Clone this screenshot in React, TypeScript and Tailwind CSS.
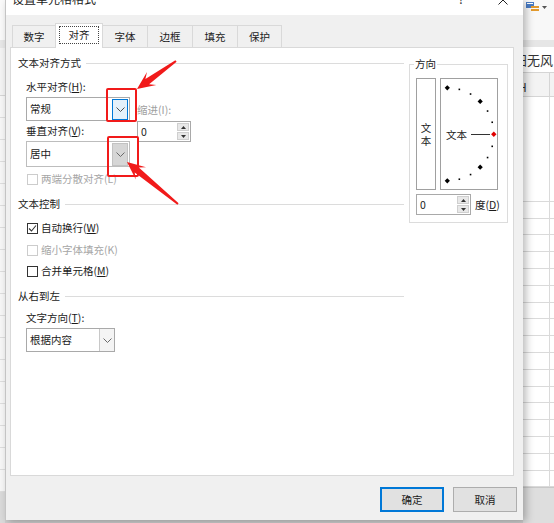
import React from 'react'

const RED = '#f11a1a'

function Chevron({ color = '#4d4d4d' }: { color?: string }) {
  return (
    <svg width="9" height="5" viewBox="0 0 9 5">
      <path d="M0.5 0.5 L4.5 4.5 L8.5 0.5" fill="none" stroke={color} strokeWidth="1" />
    </svg>
  )
}

function SpinArrows() {
  return (
    <div className="flex flex-col gap-[1px] w-[13px] h-full py-[1px] pr-[1px]">
      <div className="flex-1 bg-[#e8e8e8] border border-[#cfcfcf] flex items-center justify-center">
        <svg width="5" height="3" viewBox="0 0 5 3">
          <path d="M0 3 L2.5 0 L5 3 Z" fill="#333" />
        </svg>
      </div>
      <div className="flex-1 bg-[#e8e8e8] border border-[#cfcfcf] flex items-center justify-center">
        <svg width="5" height="3" viewBox="0 0 5 3">
          <path d="M0 0 L2.5 3 L5 0 Z" fill="#333" />
        </svg>
      </div>
    </div>
  )
}

function CheckRow({ checked, disabled, children }: { checked?: boolean; disabled?: boolean; children: React.ReactNode }) {
  return (
    <div className={`flex items-center h-[16px] pl-[9px] gap-[3px] ${disabled ? 'text-[#a6a6a6]' : ''}`}>
      <div className={`w-[11px] h-[11px] border bg-white flex items-center justify-center ${disabled ? 'border-[#cccccc]' : 'border-[#333333]'}`}>
        {checked && (
          <svg width="9" height="9" viewBox="0 0 9 9">
            <path d="M1 4.5 L3.5 7 L8 1.5" fill="none" stroke="#333" strokeWidth="1.1" />
          </svg>
        )}
      </div>
      <span className="leading-[16px]">{children}</span>
    </div>
  )
}

function SectionTitle({ text, className = '' }: { text: string; className?: string }) {
  return (
    <div className={`flex items-center gap-[5px] h-[16px] ${className}`}>
      <span className="leading-[16px] whitespace-nowrap">{text}</span>
      <div className="flex-1 h-px bg-[#dcdcdc]" />
    </div>
  )
}

function arrowPoints(tx: number, ty: number, px: number, py: number) {
  const dx = px - tx
  const dy = py - ty
  const len = Math.hypot(dx, dy)
  const ux = dx / len
  const uy = dy / len
  const nx = -uy
  const ny = ux
  const head = 18
  const barb = 8
  const neck = 3.2
  const tail = 1
  const bx = px - ux * head
  const by = py - uy * head
  const kx = px - ux * head * 0.7
  const ky = py - uy * head * 0.7
  const pts = [
    [tx + nx * tail, ty + ny * tail],
    [kx + nx * neck, ky + ny * neck],
    [bx + nx * barb, by + ny * barb],
    [px, py],
    [bx - nx * barb, by - ny * barb],
    [kx - nx * neck, ky - ny * neck],
    [tx - nx * tail, ty - ny * tail],
  ]
  return pts.map(p => `${p[0].toFixed(1)},${p[1].toFixed(1)}`).join(' ')
}

function Dial() {
  const cx = 6.3
  const cy = 55.3
  const r = 46.5
  const marks = []
  for (let a = -90; a <= 90; a += 15) {
    const rad = (a * Math.PI) / 180
    const x = cx + r * Math.cos(rad)
    const y = cy - r * Math.sin(rad)
    const big = a % 45 === 0
    if (a === 0) continue
    if (big) {
      marks.push(<path key={a} d={`M${x} ${y - 2.6} L${x + 2.6} ${y} L${x} ${y + 2.6} L${x - 2.6} ${y} Z`} fill="#000" />)
    } else {
      marks.push(<rect key={a} x={x - 0.8} y={y - 0.8} width="1.6" height="1.6" fill="#000" />)
    }
  }
  return (
    <svg width="56" height="110" viewBox="0 0 56 110">
      {marks}
      <text x="5" y="59.5" fontSize="10.5" fill="#1b1b1b" fontFamily="'Noto Sans CJK SC', sans-serif">文本</text>
      <line x1="30" y1="55.5" x2="49" y2="55.5" stroke="#333" strokeWidth="1" />
      <path d={`M52.8 52.6 L55.5 55.3 L52.8 58 L50.1 55.3 Z`} fill="#e00000" />
    </svg>
  )
}

const tabs = [
  { t: '数字', w: 'w-[44px]' },
  { t: '对齐', w: 'w-[48px]', active: true },
  { t: '字体', w: 'w-[46px]' },
  { t: '边框', w: 'w-[46px]' },
  { t: '填充', w: 'w-[46px]' },
  { t: '保护', w: 'w-[45px]' },
]

function Dialog() {
  return (
    <div className="relative z-10 w-[518px] h-[520px] flex flex-col bg-[#f0f0f0] shadow-[3px_2px_8px_rgba(0,0,0,0.28)] border-l border-[#c4c4c4]">
      {/* title bar */}
      <div className="h-[15px] bg-white flex items-start overflow-hidden pl-[6px]">
        <span className="-mt-[9px] leading-[16px] text-[12px]">设置单元格格式</span>
        <span className="ml-auto -mt-[9px] leading-[16px] text-[12px] text-[#333]">?</span>
        <svg className="ml-[34px] mr-[15px] -mt-[5px]" width="10" height="10" viewBox="0 0 10 10">
          <path d="M0.5 0.5 L9.5 9.5 M9.5 0.5 L0.5 9.5" stroke="#222" strokeWidth="1" />
        </svg>
      </div>

      <div className="flex-1 flex flex-col pt-[8px]">
        {/* tabs */}
        <div className="relative z-10 h-[24px] ml-[6px] flex items-end">
          {tabs.map(tab =>
            tab.active ? (
              <div
                key={tab.t}
                className={`${tab.w} h-[25px] -mb-px -ml-px bg-white border border-b-0 border-[#d9d9d9] flex items-start justify-start pl-[3px] pt-[2px]`}
              >
                <span className="w-[40px] h-[18px] border border-dotted border-[#444] flex items-center justify-center leading-[16px]">
                  {tab.t}
                </span>
              </div>
            ) : (
              <div
                key={tab.t}
                className={`${tab.w} h-[22px] -ml-px first:ml-0 bg-[#f0f0f0] border border-b-0 border-[#d9d9d9] flex items-center justify-center leading-[16px]`}
              >
                {tab.t}
              </div>
            )
          )}
        </div>

        {/* panel */}
        <div className="ml-[4px] w-[504px] h-[429px] bg-white border border-[#d9d9d9] flex">
          {/* left column */}
          <div className="w-[393px] pl-[7px] pt-[7px] flex flex-col">
            <SectionTitle text="文本对齐方式" />

            <div className="flex mt-[8px] pl-[8px]">
              <div className="w-[104px] flex flex-col">
                <div className="h-[16px] leading-[16px]">
                  水平对齐(<u>H</u>):
                </div>
                <div className="mt-[2px] h-[24px] border border-[#a9a9a9] bg-white flex items-center">
                  <span className="pl-[3px] flex-1">常规</span>
                  <div className="w-[16px] h-[21px] mr-[1px] bg-[#e5f1fb] border border-[#0078d7] flex items-center justify-center">
                    <Chevron />
                  </div>
                </div>
                <div className="mt-[2px] h-[16px] leading-[16px]">
                  垂直对齐(<u>V</u>):
                </div>
                <div className="mt-[2px] h-[26px] border border-[#bdbdbd] bg-white flex items-center">
                  <span className="pl-[3px] flex-1">居中</span>
                  <div className="w-[16px] h-[23px] mr-[1px] bg-[#d6d6d6] border border-[#c2c2c2] flex items-center justify-center">
                    <Chevron color="#6a6a6a" />
                  </div>
                </div>
              </div>
              <div className="ml-[7px] flex flex-col">
                <div className="mt-[23px] h-[16px] leading-[16px] text-[#a0a0a0]">缩进(I):</div>
                <div className="mt-[3px] w-[54px] h-[21px] border border-[#a9a9a9] bg-white flex items-center">
                  <span className="pl-[3px] flex-1">0</span>
                  <SpinArrows />
                </div>
              </div>
            </div>

            <div className="mt-[4px]">
              <CheckRow disabled>两端分散对齐(L)</CheckRow>
            </div>

            <SectionTitle text="文本控制" className="mt-[9px]" />
            <div className="mt-[8px]">
              <CheckRow checked>
                自动换行(<u>W</u>)
              </CheckRow>
            </div>
            <div className="mt-[6px]">
              <CheckRow disabled>缩小字体填充(K)</CheckRow>
            </div>
            <div className="mt-[5px]">
              <CheckRow>
                合并单元格(<u>M</u>)
              </CheckRow>
            </div>

            <SectionTitle text="从右到左" className="mt-[9px]" />
            <div className="mt-[6px] pl-[8px] h-[16px] leading-[16px]">
              文字方向(<u>T</u>):
            </div>
            <div className="mt-[2px] ml-[8px] w-[89px] h-[24px] border border-[#a9a9a9] bg-white flex items-center">
              <span className="pl-[3px] flex-1">根据内容</span>
              <div className="w-[15px] h-full bg-[#f4f4f4] border-l border-[#c8c8c8] flex items-center justify-center">
                <Chevron color="#6a6a6a" />
              </div>
            </div>
          </div>

          {/* orientation group */}
          <div className="ml-[5px] mt-[16px] w-[99px] h-[159px] border border-[#dcdcdc] flex flex-col">
            <span className="-mt-[9px] ml-[4px] w-fit px-[1px] bg-white leading-[16px]">方向</span>
            <div className="mt-[6px] ml-[6px] flex gap-[4px]">
              <div className="w-[20px] h-[112px] border border-[#a0a0a0] flex flex-col items-center justify-center leading-[13px]">
                <span>文</span>
                <span>本</span>
              </div>
              <div className="w-[58px] h-[112px] border border-[#a0a0a0]">
                <Dial />
              </div>
            </div>
            <div className="mt-[4px] ml-[6px] flex items-center">
              <div className="w-[55px] h-[21px] border border-[#a9a9a9] bg-white flex items-center">
                <span className="pl-[3px] flex-1">0</span>
                <SpinArrows />
              </div>
              <span className="ml-[4px] leading-[16px]">
                度(<u>D</u>)
              </span>
            </div>
          </div>
        </div>

        {/* buttons */}
        <div className="mt-[11px] flex justify-end gap-[9px] pr-[6px]">
          <button className="w-[64px] h-[25px] bg-[#e1e1e1] border-2 border-[#0078d7] leading-[16px]">确定</button>
          <button className="w-[64px] h-[25px] bg-[#e1e1e1] border border-[#adadad] leading-[16px]">取消</button>
        </div>
      </div>
    </div>
  )
}

const rows = Array.from({ length: 18 }, (_, i) => i)

function LeftStrip() {
  return (
    <div className="w-[5px] h-full flex flex-col bg-white">
      <div className="h-[40px] bg-[#fafafa]" />
      <div className="h-[8px] bg-[#e8e8e8]" />
      <div className="h-[48px] bg-[#f4f4f4] border-b border-[#d6d6d6]" />
      {rows.map(i => (
        <div key={i} className="h-[22px] border-b border-[#dedede] bg-[#f7f7f7]" />
      ))}
      <div className="flex-1 bg-[#dadada]" />
    </div>
  )
}

function RightStrip() {
  return (
    <div className="w-[31px] h-full flex flex-col bg-white overflow-hidden">
      <div className="h-[40px] bg-[#f8f8f8] flex items-start pt-[1px] pl-[3px] gap-[3px]">
        <svg width="13" height="12" viewBox="0 0 13 12">
          <rect x="0" y="1" width="8" height="6" fill="#4a7cc4" />
          <rect x="5" y="5" width="8" height="2" fill="#e39a2d" />
          <rect x="5" y="8" width="8" height="2" fill="#e39a2d" />
          <rect x="1" y="2" width="6" height="1" fill="#ffffff" />
        </svg>
        <svg className="mt-[5px]" width="5" height="3" viewBox="0 0 5 3">
          <path d="M0 0 L5 0 L2.5 3 Z" fill="#555" />
        </svg>
      </div>
      <div className="h-[7px] bg-[#e6e6e6]" />
      <div className="h-[26px] border-b border-[#d5d5d5] flex items-center overflow-hidden">
        <span className="-ml-[9px] text-[13px] whitespace-nowrap text-[#333]">阳无风</span>
      </div>
      <div className="h-[24px] bg-[#f3f3f3] border-b border-[#d5d5d5]">
        <div className="w-[27px] h-full border-r border-[#d5d5d5] flex items-end pb-[2px] overflow-hidden">
          <span className="-ml-[5px] text-[12px] leading-[14px] text-[#333]">H</span>
        </div>
      </div>
      <div className="h-[88px]">
        <div className="w-[27px] h-full border-r border-[#dadada]" />
      </div>
      {rows.map(i => (
        <div key={i} className="h-[16.8px] border-b border-[#dadada]">
          <div className="w-[27px] h-full border-r border-[#dadada]" />
        </div>
      ))}
      <div className="flex-1 bg-[#dedede] border-t border-[#c8c8c8]" />
    </div>
  )
}

export default function App() {
  return (
    <div className="relative w-[554px] h-[523px] overflow-hidden flex bg-white text-[10.5px] text-[#1b1b1b] font-[family-name:'Noto_Sans_CJK_SC','Noto_Sans',sans-serif]">
      <LeftStrip />
      <div className="w-[518px] h-full flex flex-col">
        <Dialog />
        <div className="flex-1 bg-[#cfcfcf]" />
      </div>
      <RightStrip />

      {/* red annotations */}
      <svg className="absolute inset-0 z-20 pointer-events-none" width="554" height="523" viewBox="0 0 554 523">
        <rect x="107" y="89" width="29" height="32" fill="none" stroke={RED} strokeWidth="2" rx="1" />
        <rect x="108" y="137" width="30" height="39" fill="none" stroke={RED} strokeWidth="2" rx="1" />
        <polygon points={arrowPoints(176, 61, 137, 89)} fill={RED} />
        <polygon points={arrowPoints(178, 204, 127, 162)} fill={RED} />
      </svg>
    </div>
  )
}
